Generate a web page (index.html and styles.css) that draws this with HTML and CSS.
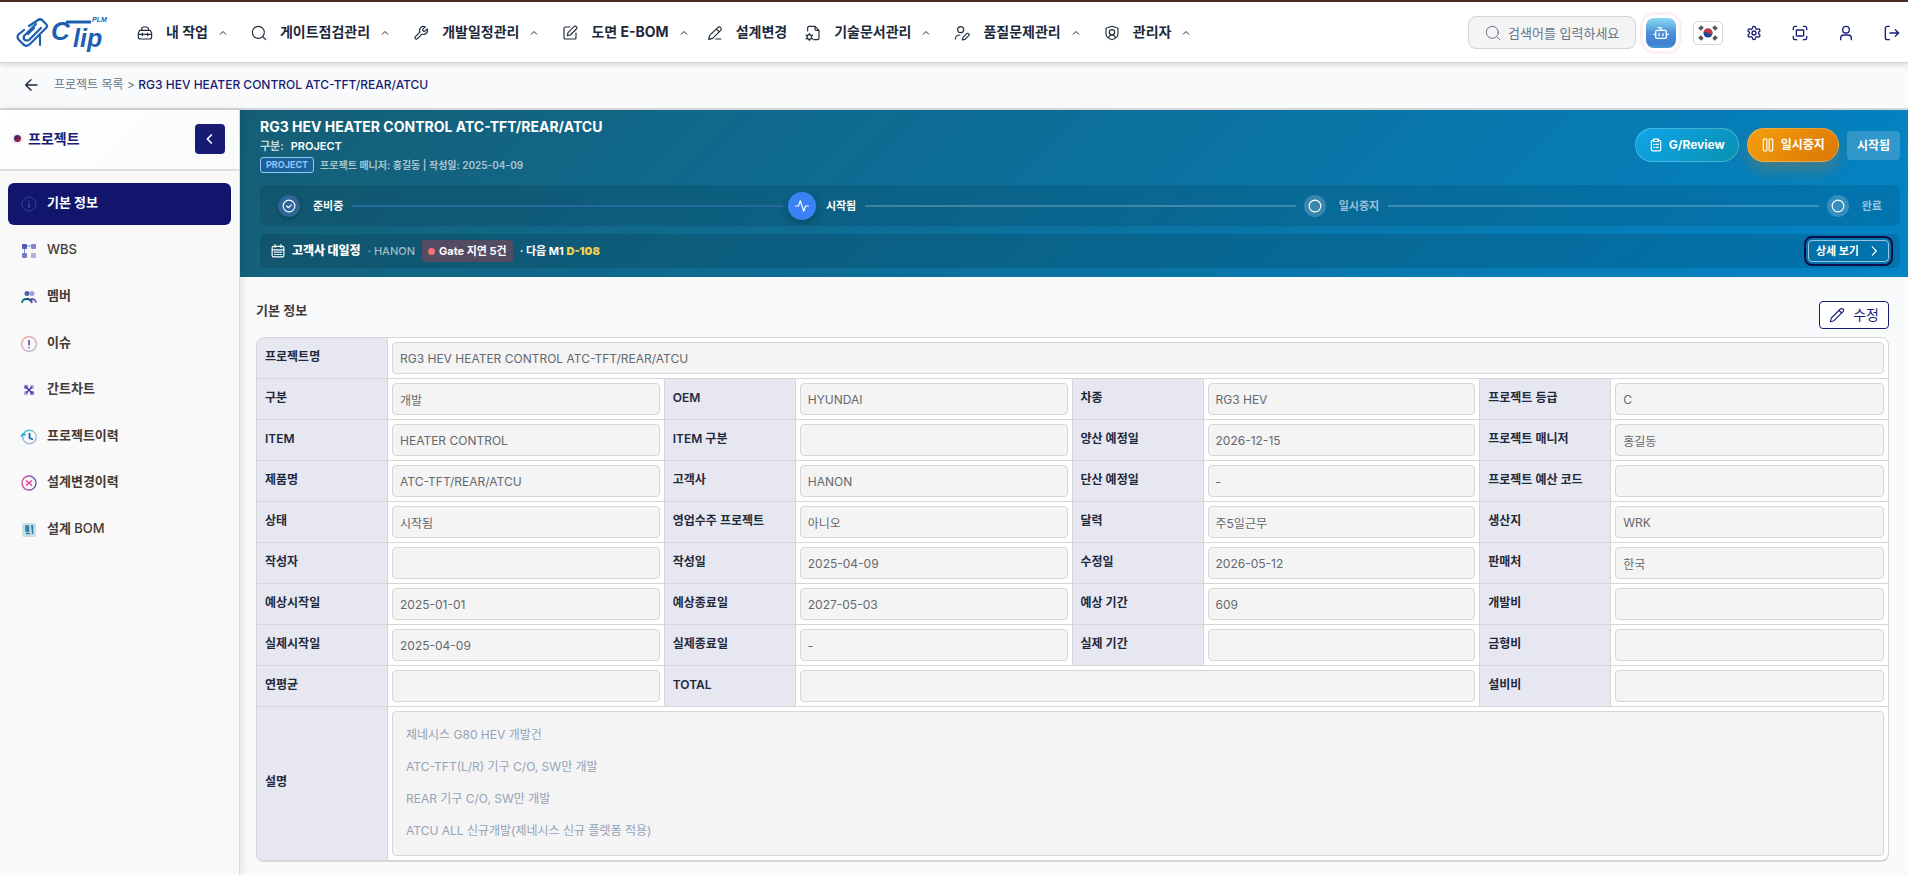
FILE: index.html
```
<!DOCTYPE html>
<html lang="ko">
<head>
<meta charset="utf-8">
<title>CLIP PLM - 프로젝트 기본 정보</title>
<link rel="stylesheet" href="styles.css">
</head>
<body>
<svg class="defs" aria-hidden="true">
  <defs>
    <linearGradient id="g-member" x1="0" y1="0" x2="1" y2="0"><stop offset="0" stop-color="#14917f"/><stop offset=".5" stop-color="#1c2f86"/><stop offset="1" stop-color="#8c7fd0"/></linearGradient>
    <linearGradient id="g-issue" x1="0" y1="0" x2="1" y2="1"><stop offset="0" stop-color="#f0a9a2"/><stop offset="1" stop-color="#b9b3d8"/></linearGradient>
    <linearGradient id="g-clock" x1="0" y1="0" x2="1" y2="1"><stop offset="0" stop-color="#19b5d8"/><stop offset=".5" stop-color="#a6c6dc"/><stop offset="1" stop-color="#a9b0d6"/></linearGradient>
    <linearGradient id="g-change" x1="0" y1="0" x2="1" y2="0"><stop offset="0" stop-color="#d84fa6"/><stop offset="1" stop-color="#6b5aa8"/></linearGradient>
    <symbol id="i-up" viewBox="0 0 14 14"><path d="M4 8.500 7 5.500l3 3"/></symbol>
    <symbol id="i-search" viewBox="0 0 24 24"><circle cx="11" cy="11" r="9"/><path d="m18 18 4 4"/></symbol>
  </defs>
</svg>
<header class="topbar">
  <a class="logo" href="#" aria-label="Clip PLM">
    <svg width="94" height="34" viewBox="0 0 94 34">
      <g fill="none" stroke="#1c5fae" stroke-width="2.200" stroke-linecap="round" stroke-linejoin="round">
        <path d="M13 10 22 4q2-1.500 4 0l4 4q2 2 0 4L14 28q-3 3-6 1l-5-5q-3-3 0-6l5-4"/>
        <path d="m8 20 12-12"/><path d="M8 20q-1 3 1 4t4 0l12-12"/><path d="M12 18 18 12"/>
        <path d="M24 20v9"/>
      </g>
      <path d="M50 6h25" stroke="#1c5fae" stroke-width="3"/>
      <text class="logo-c" x="35" y="24">C</text>
      <text class="logo-lip" x="57" y="31">lip</text>
      <text class="logo-plm" x="76" y="6">PLM</text>
    </svg>
  </a>
  <nav class="menu" aria-label="주 메뉴">
    <a href="#"><svg class="ic" viewBox="0 0 24 24"><path d="M7 8V6q0-3 3-3h4q3 0 3 3v2M4 8h16l2 4v6q0 3-3 3H5q-3 0-3-3v-6zM2 14h20M8 12v4m8-4v4"/></svg><span>내 작업</span><svg class="up"><use href="#i-up"/></svg></a>
    <a href="#"><svg class="ic"><use href="#i-search"/></svg><span>게이트점검관리</span><svg class="up"><use href="#i-up"/></svg></a>
    <a href="#"><svg class="ic" viewBox="0 0 24 24"><path d="M14.500 6.500a1 1 0 0 0 0 1.400l1.600 1.600a1 1 0 0 0 1.400 0l3.800-3.800a6 6 0 0 1-7.900 7.900l-6.900 6.900a2.100 2.100 0 0 1-3-3l6.900-6.900a6 6 0 0 1 7.900-7.900z"/></svg><span>개발일정관리</span><svg class="up"><use href="#i-up"/></svg></a>
    <a href="#"><svg class="ic" viewBox="0 0 24 24"><path d="M12 3H5q-2 0-2 2v14q0 2 2 2h14q2 0 2-2v-7M18 2.500a2.100 2.100 0 0 1 3.500 3.500l-9 9-4.500 1 1-4.500z"/></svg><span>도면 E-BOM</span><svg class="up"><use href="#i-up"/></svg></a>
    <a class="leaf" href="#"><svg class="ic" viewBox="0 0 24 24"><path d="M13 21h8M16 4a2.800 2.800 0 0 1 4.500 4.200L8.500 20 2.500 21.500 4 15.500zM14 6l4 4"/></svg><span>설계변경</span></a>
    <a href="#"><svg class="ic" viewBox="0 0 24 24"><path d="M4 9V4q0-2 2-2h9l6 6v12q0 2-2 2h-6M15 2v4q0 2 2 2h4"/><circle cx="6.500" cy="18" r="3.500"/><path d="M6.500 12.500v2m0 7v2M1.500 15l2 1.300m6 3.400 2 1.300m0-6-2 1.300m-6 3.400-2 1.300"/></svg><span>기술문서관리</span><svg class="up"><use href="#i-up"/></svg></a>
    <a href="#"><svg class="ic" viewBox="0 0 24 24"><circle cx="10" cy="7" r="4.500"/><path d="M2 21v-1q1-5 7-5M19 13a2 2 0 0 1 3 3l-5.500 5.500-4 1 1-4z"/></svg><span>품질문제관리</span><svg class="up"><use href="#i-up"/></svg></a>
    <a href="#"><svg class="ic" viewBox="0 0 24 24"><path d="m12 2 9 3v8q0 6-9 9-9-3-9-9V5z"/><circle cx="12" cy="11" r="4"/><path d="M7 19q1-4 5-4t5 4"/></svg><span>관리자</span><svg class="up"><use href="#i-up"/></svg></a>
  </nav>
  <div class="tools">
    <label class="search"><svg class="ic"><use href="#i-search"/></svg><input type="text" placeholder="검색어를 입력하세요" aria-label="검색"></label>
    <button class="bot" aria-label="AI 도우미"><svg class="ic" viewBox="0 0 24 24"><path d="M12 8V4H8"/><rect x="4" y="8" width="16" height="12" rx="2"/><path d="M1 14h3m16 0h3M9 13v3m6-3v3"/></svg></button>
    <button class="flag" aria-label="한국어"><svg width="20" height="16" viewBox="0 0 20 16"><g stroke="#555" stroke-width="3.500"><path d="m1.500 4.500 3-3M15.500 1.500l3 3M1.500 11.500l3 3M15.500 14.500l3-3"/></g><circle cx="10" cy="8" r="4.500" fill="#1c4596"/><path d="M5.500 8a4.500 4.500 0 0 1 9 0c-1.500 2-3 1-4.500 0s-3-1.500-4.500 0z" fill="#c93a3e"/></svg></button>
    <button class="tool" aria-label="설정"><svg class="ic" viewBox="0 0 24 24"><path d="M12.200 2h-.4a2 2 0 0 0-2 2v.2a2 2 0 0 1-1 1.700l-.4.300a2 2 0 0 1-2 0l-.2-.1a2 2 0 0 0-2.700.7l-.2.400a2 2 0 0 0 .7 2.700l.2.100a2 2 0 0 1 1 1.700v.5a2 2 0 0 1-1 1.700l-.2.100a2 2 0 0 0-.7 2.700l.2.400a2 2 0 0 0 2.700.7l.2-.1a2 2 0 0 1 2 0l.4.300a2 2 0 0 1 1 1.700v.2a2 2 0 0 0 2 2h.4a2 2 0 0 0 2-2v-.2a2 2 0 0 1 1-1.700l.4-.3a2 2 0 0 1 2 0l.2.100a2 2 0 0 0 2.700-.7l.2-.4a2 2 0 0 0-.7-2.700l-.2-.1a2 2 0 0 1-1-1.700v-.5a2 2 0 0 1 1-1.700l.2-.1a2 2 0 0 0 .7-2.700l-.2-.4a2 2 0 0 0-2.700-.7l-.2.100a2 2 0 0 1-2 0l-.4-.3a2 2 0 0 1-1-1.700V4a2 2 0 0 0-2-2z"/><circle cx="12" cy="12" r="3"/></svg></button>
    <button class="tool" aria-label="전체 화면"><svg class="ic" viewBox="0 0 24 24"><path d="M2 7V5q0-3 3-3h2M17 2h2q3 0 3 3v2M22 17v2q0 3-3 3h-2M7 22H5q-3 0-3-3v-2"/><rect x="6.500" y="7.500" width="11" height="9" rx="1"/></svg></button>
    <button class="tool" aria-label="내 계정"><svg class="ic" viewBox="0 0 24 24"><circle cx="12" cy="7" r="5"/><path d="M4 22v-2q0-5 5-5h6q5 0 5 5v2"/></svg></button>
    <button class="tool" aria-label="로그아웃"><svg class="ic" viewBox="0 0 24 24"><path d="M8 22H5q-3 0-3-3V5q0-3 3-3h3M17 17l5-5-5-5M22 12H9"/></svg></button>
  </div>
</header>
<nav class="crumbs" aria-label="경로">
  <button class="back" aria-label="뒤로"><svg class="ic" viewBox="0 0 24 24"><path d="M21 12H4m8-8-8 8 8 8"/></svg></button>
  <p><a href="#">프로젝트 목록</a> &gt; <strong>RG3 HEV HEATER CONTROL ATC-TFT/REAR/ATCU</strong></p>
</nav>
<div class="body">
  <aside class="side">
    <div class="side-head"><i class="dot"></i><h2>프로젝트</h2><button aria-label="메뉴 접기"><svg class="ic" viewBox="0 0 24 24"><path d="m14 6-6 6 6 6"/></svg></button></div>
    <ul class="side-nav">
      <li><a class="on" href="#"><svg viewBox="0 0 16 16"><circle cx="8" cy="8" r="7" fill="none" stroke="#24489a"/><path d="M8 4.500v1M8 7v5" stroke="#3d6fc0"/></svg>기본 정보</a></li>
      <li><a class="latin" href="#"><svg viewBox="0 0 16 16"><path d="M5 3h6M3.500 5v6" stroke="#4a9be8"/><rect x="1" y="1" width="5" height="5" rx="1" fill="#5f55b4"/><rect x="10" y="1" width="5" height="5" rx="1" fill="#8c83cc"/><rect x="1" y="10" width="5" height="5" rx="1" fill="#8077c5"/><rect x="10" y="10" width="5" height="5" rx="1" fill="#b7aedd"/></svg>WBS</a></li>
      <li><a href="#"><svg viewBox="0 0 16 16"><circle cx="11" cy="4.500" r="2.500" fill="#a79bdc"/><circle cx="6" cy="4.500" r="2.500" fill="#4668a8"/><path d="M1 14q0-4 5-4 4 0 5 4M10 10q5 0 5 4" fill="none" stroke="url(#g-member)" stroke-width="2"/></svg>멤버</a></li>
      <li><a href="#"><svg viewBox="0 0 16 16"><circle cx="8" cy="8" r="7.300" fill="none" stroke="url(#g-issue)" stroke-width="1.400"/><path d="M8 4v5.500M8 11v1.200" stroke="#1b1f77" stroke-width="1.200"/></svg>이슈</a></li>
      <li><a href="#"><svg viewBox="0 0 16 16"><g fill="#8d80d4"><circle cx="5" cy="5" r="2.300"/><circle cx="11" cy="5" r="2.300" fill="#b5abe4"/><circle cx="5" cy="11" r="2.300" fill="#b5abe4"/><circle cx="11" cy="11" r="2.300"/></g><path d="m4.500 4.500 7 7M11 5l-6 6" stroke="#3b309e" stroke-width="1.300"/></svg>간트차트</a></li>
      <li><a href="#"><svg viewBox="0 0 16 16"><circle cx="8.500" cy="8" r="6.800" fill="none" stroke="url(#g-clock)" stroke-width="1.400"/><path d="M0 7.500 2 5l3 1" fill="none" stroke="#19b5d8" stroke-width="1.500"/><path d="M8.500 4v5l3.500 1.500" fill="none" stroke="#1466a5" stroke-width="1.800"/></svg>프로젝트이력</a></li>
      <li><a href="#"><svg viewBox="0 0 16 16"><circle cx="8" cy="8" r="7" fill="none" stroke="url(#g-change)" stroke-width="1.400"/><path d="m5 5.500 6 5m0-5-6 5" stroke="#e83e9a" stroke-width="1.600"/></svg>설계변경이력</a></li>
      <li><a href="#"><svg viewBox="0 0 16 16"><rect x="1" y="1" width="14" height="14" rx="2" fill="#c5dfe4"/><path d="M5 4h2.500v5H5zM10 4h1.500v8M5 11.500h4" fill="#2aa79b" stroke="#2878a0" stroke-width="1.400"/></svg><span>설계 <span class="latin">BOM</span></span></a></li>
    </ul>
  </aside>
  <main class="main">
    <section class="banner">
      <div class="ban-top">
        <div>
          <h1>RG3 HEV HEATER CONTROL ATC-TFT/REAR/ATCU</h1>
          <p class="kind"><span>구분:</span><b>PROJECT</b></p>
          <p class="meta"><span class="tag">PROJECT</span>프로젝트 매니저: 홍길동 | 작성일: 2025-04-09</p>
        </div>
        <div class="actions">
          <button class="pill review"><svg class="ic" viewBox="0 0 24 24"><path d="M8 4H6q-2 0-2 2v14q0 2 2 2h12q2 0 2-2V6q0-2-2-2h-2M8 2h8v4H8zM8 11h1m3 0h4M8 16h1m3 0h4"/></svg>G/Review</button>
          <button class="pill pause"><svg class="ic" viewBox="0 0 24 24"><rect x="4" y="2" width="6" height="20" rx="1"/><rect x="14" y="2" width="6" height="20" rx="1"/></svg>일시중지</button>
          <span class="state">시작됨</span>
        </div>
      </div>
      <ol class="steps">
        <li class="done"><i><svg class="ic" viewBox="0 0 24 24"><circle cx="12" cy="12" r="10"/><path d="m8 12 3 3 5-5"/></svg></i><span>준비중</span></li>
        <li class="now"><i><svg class="ic" viewBox="0 0 24 24"><path d="M1 12h5l3-9 6 18 3-9h5"/></svg></i><span>시작됨</span></li>
        <li><i><svg class="ic" viewBox="0 0 24 24"><circle cx="12" cy="12" r="10"/></svg></i><span>일시중지</span></li>
        <li><i><svg class="ic" viewBox="0 0 24 24"><circle cx="12" cy="12" r="10"/></svg></i><span>완료</span></li>
      </ol>
      <div class="plan">
        <svg class="ic" viewBox="0 0 24 24"><rect x="2" y="4" width="20" height="18" rx="2"/><path d="M7 1v5m10-5v5M2 10h20M6 14h2m2 0h4m2 0h2M6 18h2m2 0h4m2 0h2"/></svg>
        <strong>고객사 대일정</strong><span class="cust">· HANON</span>
        <span class="late"><i></i>Gate 지연 5건</span>
        <span class="next">· 다음 M1 <b>D-108</b></span>
        <button class="detail">상세 보기<svg class="ic" viewBox="0 0 24 24"><path d="m9 5 7 7-7 7"/></svg></button>
      </div>
    </section>
    <section class="info">
      <div class="info-head"><h2>기본 정보</h2><button class="edit"><svg class="ic" viewBox="0 0 24 24"><path d="M17 3a2.800 2.800 0 0 1 4 4L7.500 20.500 2 22l1.500-5.500zM15 5l4 4"/></svg>수정</button></div>
      <div class="sheet">
      <table>
        <colgroup><col class="ch"><col><col class="ch"><col><col class="ch"><col><col class="ch"><col></colgroup>
        <tr><th><label for="f1">프로젝트명</label></th><td colspan="7"><input id="f1" readonly value="RG3 HEV HEATER CONTROL ATC-TFT/REAR/ATCU"></td></tr>
        <tr><th><label for="f2">구분</label></th><td><input id="f2" readonly value="개발"></td><th><label for="f3">OEM</label></th><td><input id="f3" readonly value="HYUNDAI"></td><th><label for="f4">차종</label></th><td><input id="f4" readonly value="RG3 HEV"></td><th><label for="f5">프로젝트 등급</label></th><td><input id="f5" readonly value="C"></td></tr>
        <tr><th><label for="f6">ITEM</label></th><td><input id="f6" readonly value="HEATER CONTROL"></td><th><label for="f7">ITEM 구분</label></th><td><input id="f7" readonly></td><th><label for="f8">양산 예정일</label></th><td><input id="f8" readonly value="2026-12-15"></td><th><label for="f9">프로젝트 매니저</label></th><td><input id="f9" readonly value="홍길동"></td></tr>
        <tr><th><label for="f10">제품명</label></th><td><input id="f10" readonly value="ATC-TFT/REAR/ATCU"></td><th><label for="f11">고객사</label></th><td><input id="f11" readonly value="HANON"></td><th><label for="f12">단산 예정일</label></th><td><input id="f12" readonly value="-"></td><th><label for="f13">프로젝트 예산 코드</label></th><td><input id="f13" readonly></td></tr>
        <tr><th><label for="f14">상태</label></th><td><input id="f14" readonly value="시작됨"></td><th><label for="f15">영업수주 프로젝트</label></th><td><input id="f15" readonly value="아니오"></td><th><label for="f16">달력</label></th><td><input id="f16" readonly value="주5일근무"></td><th><label for="f17">생산지</label></th><td><input id="f17" readonly value="WRK"></td></tr>
        <tr><th><label for="f18">작성자</label></th><td><input id="f18" readonly></td><th><label for="f19">작성일</label></th><td><input id="f19" readonly value="2025-04-09"></td><th><label for="f20">수정일</label></th><td><input id="f20" readonly value="2026-05-12"></td><th><label for="f21">판매처</label></th><td><input id="f21" readonly value="한국"></td></tr>
        <tr><th><label for="f22">예상시작일</label></th><td><input id="f22" readonly value="2025-01-01"></td><th><label for="f23">예상종료일</label></th><td><input id="f23" readonly value="2027-05-03"></td><th><label for="f24">예상 기간</label></th><td><input id="f24" readonly value="609"></td><th><label for="f25">개발비</label></th><td><input id="f25" readonly></td></tr>
        <tr><th><label for="f26">실제시작일</label></th><td><input id="f26" readonly value="2025-04-09"></td><th><label for="f27">실제종료일</label></th><td><input id="f27" readonly value="-"></td><th><label for="f28">실제 기간</label></th><td><input id="f28" readonly></td><th><label for="f29">금형비</label></th><td><input id="f29" readonly></td></tr>
        <tr><th><label for="f30">연평균</label></th><td><input id="f30" readonly></td><th><label for="f31">TOTAL</label></th><td colspan="3"><input id="f31" readonly></td><th><label for="f32">설비비</label></th><td><input id="f32" readonly></td></tr>
        <tr><th><label for="f33">설명</label></th><td colspan="7"><textarea id="f33" rows="4" readonly>제네시스 G80 HEV 개발건
ATC-TFT(L/R) 기구 C/O, SW만 개발
REAR 기구 C/O, SW만 개발
ATCU ALL 신규개발(제네시스 신규 플렛폼 적용)</textarea></td></tr>
      </table>
      </div>
    </section>
  </main>
</div>
</body>
</html>
```
FILE: styles.css
```
* { box-sizing: border-box; }
body {
  margin: 0;
  min-height: 100vh;
  display: flex;
  flex-direction: column;
  font: 12px/16px Inter, "Noto Sans CJK KR", sans-serif;
  color: #1e293b;
  background: #f8fafc;
}
h1, h2, p, ul, ol { margin: 0; padding: 0; }
ul, ol { list-style: none; }
a { color: inherit; text-decoration: none; }
button, input, textarea { font: inherit; color: inherit; }
button { padding: 0; border: 0; background: none; display: inline-flex; align-items: center; justify-content: center; }
.defs { position: absolute; width: 0; height: 0; }
.ic { width: 16px; height: 16px; flex: none; fill: none; stroke: currentColor; stroke-width: 2; stroke-linecap: round; stroke-linejoin: round; }
.up { width: 14px; height: 14px; margin: 0 3px 0 8px; fill: none; stroke: currentColor; }

.topbar {
  position: relative;
  z-index: 3;
  height: 63px;
  display: flex;
  align-items: center;
  padding: 1px 1px 0 16px;
  background: #fff;
  border-top: 2px solid #4a2b1e;
  border-bottom: 1px solid #d4d4d4;
  box-shadow: 0 2px 5px rgba(0, 0, 0, .14);
}
.logo { display: flex; width: 94px; margin-right: 18px; }
.logo svg { overflow: visible; }
.logo text { fill: #1c5fae; font-family: "Liberation Sans", sans-serif; font-style: italic; font-weight: 700; }
.logo-c { font-size: 26px; }
.logo-lip { font-size: 25px; }
.logo-plm { font-size: 7px; }
.menu { display: flex; flex: 1; font-size: 14px; font-weight: 700; line-height: 20px; white-space: nowrap; }
.menu a { display: flex; align-items: center; padding: 0 9px; }
.menu .leaf { padding-left: 4px; }
.menu span { margin: 0 0 2px 13px; }
.menu .ic { stroke-width: 1.700; }
.tools { display: flex; align-items: center; color: #181c74; }
.search { display: flex; align-items: center; width: 168px; height: 33px; padding: 0 8px 0 16px; gap: 7px; border: 1px solid #d4d4d4; border-radius: 8px; background: #f4f4f4; color: #64748b; }
.search .ic { stroke-width: 1.500; }
.search input { width: 100%; min-width: 0; padding: 0; border: 0; outline: 0; background: none; font-size: 13px; }
.search input::placeholder { color: #64748b; opacity: 1; }
.bot { width: 30px; height: 30px; margin: 0 17px 0 10px; border-radius: 8px; color: #fff; background: linear-gradient(#8adcf5, #4a90d9 50%, #3f80cf 85%, #4a98d8); box-shadow: 0 0 0 3px #fff, 0 0 0 6px #fcf0f1; }
.flag { width: 30px; height: 24px; margin-right: 8px; border: 1px solid #d9d9dc; border-radius: 4px; }
.tool { width: 46px; height: 32px; }
.tool:last-child { width: 30px; margin-left: 8px; justify-content: center; }

.crumbs { display: flex; align-items: center; height: 47px; padding: 0 22px 2px; gap: 14px; border-bottom: 2px solid #d6d6d8; color: #64748b; }
.crumbs .back { width: 18px; height: 18px; color: #1e293b; }
.crumbs strong { color: #181c74; font-weight: 500; }

.body { display: flex; flex: 1; }
.side { position: relative; z-index: 2; width: 240px; flex: none; background: #f9f9f9; border-right: 1px solid #d9dadc; box-shadow: 2px 0 10px rgba(0, 0, 0, .1); }
.side-head { display: flex; align-items: center; height: 61px; padding: 0 14px 2px; gap: 7px; border-bottom: 2px solid #dededf; background: linear-gradient(135deg, #fff, #f8fafc); }
.side-head h2 { flex: 1; color: #181c74; font-size: 14px; line-height: 20px; font-weight: 700; }
.side-head button { width: 30px; height: 30px; border-radius: 4px; color: #fff; background: #171b72; }
.side-head .ic { stroke-width: 2.500; }
.dot { width: 7px; height: 7px; border-radius: 50%; background: linear-gradient(135deg, #1d2380, #c8202e); box-shadow: 0 0 4px rgba(23, 27, 114, .3); }
.side-nav { display: flex; flex-direction: column; gap: 5px; padding: 12px 8px; }
.side-nav a { display: flex; align-items: center; gap: 10px; padding: 10px 13px 12px; border-radius: 6px; color: #453a35; font-size: 13px; line-height: 1.5; font-weight: 600; }
.side-nav .latin { font-weight: 500; }
.side-nav svg { width: 16px; height: 16px; margin-top: 3px; overflow: visible; }
.side-nav .on { color: #fff; background: #11166c; font-weight: 700; }

.main { flex: 1; min-width: 0; }
.banner { display: flex; flex-direction: column; gap: 8px; padding: 7px 8px 9px 20px; color: #fff; background: linear-gradient(135deg, #155e75, #0284c7); }
.ban-top { display: flex; align-items: flex-start; justify-content: space-between; min-height: 60px; }
h1 { font-size: 14px; line-height: 20px; font-weight: 700; }
.kind { display: flex; gap: 7px; font-size: 11px; line-height: 18px; color: rgba(255, 255, 255, .75); font-weight: 600; }
.kind b { color: #fff; font-weight: 600; }
.meta { display: flex; align-items: center; gap: 6px; margin-top: 2px; font-size: 10px; line-height: 16px; color: rgba(255, 255, 255, .65); font-weight: 600; }
.tag { padding: 0 5px; line-height: 14px; border: 1px solid #93c5fd; border-radius: 3px; background: #1d6199; color: #93c5fd; font-size: 9px; font-weight: 700; }
.actions { display: flex; align-items: center; gap: 8px; margin-top: 11px; font-weight: 700; }
.pill { height: 34px; padding: 0 13px; gap: 6px; border: 1px solid rgba(255, 255, 255, .25); border-radius: 17px; font-weight: 700; }
.pill .ic { width: 14px; height: 14px; }
.review { background: linear-gradient(135deg, #0ea5e9, #0891b2); }
.pause { background: linear-gradient(135deg, #f59e0b, #d97706); box-shadow: 0 8px 16px rgba(217, 119, 6, .3); }
.state { padding: 6px 10px; line-height: 17px; border-radius: 4px; background: rgba(255, 255, 255, .18); }
.steps { display: flex; height: 41px; padding: 0 18px; border-radius: 6px; background: rgba(0, 0, 0, .1); font-size: 11px; font-weight: 700; }
.steps li { display: flex; flex: 1 0 auto; align-items: center; color: rgba(255, 255, 255, .6); }
.steps li:last-child { flex: none; }
.steps li:not(:last-child)::after { content: ""; flex: 1; height: 2px; margin: 0 8px 0 9px; background: rgba(255, 255, 255, .22); }
.steps i { display: flex; align-items: center; justify-content: center; width: 22px; height: 22px; margin-right: 13px; border-radius: 50%; background: rgba(255, 255, 255, .2); color: #fff; }
.steps .ic { width: 14px; height: 14px; }
.steps .done, .steps .now { color: #fff; }
.steps .done i { background: #2c6596; box-shadow: 0 2px 4px rgba(0, 0, 0, .2); }
.steps .done:not(:last-child)::after { background: #246a9f; }
.steps .now i { background: #3b82f6; box-shadow: 0 0 0 3px #3b82f6, 0 3px 8px 3px rgba(0, 0, 0, .25); }
.plan { display: flex; align-items: center; height: 34px; padding: 0 11px; gap: 7px; border-radius: 6px; background: rgba(0, 0, 0, .12); font-size: 11px; font-weight: 700; }
.plan > .ic { width: 14px; height: 14px; }
.plan strong { font-size: 12px; }
.cust { color: rgba(255, 255, 255, .6); font-weight: 500; }
.late { display: flex; align-items: center; gap: 4px; padding: 3px 6px; border-radius: 3px; background: #524b61; }
.late i { width: 7px; height: 7px; border-radius: 50%; background: #f87171; }
.next b { color: #f5cf4a; }
.detail { height: 22px; margin-left: auto; padding: 0 7px; gap: 8px; border: 1px solid rgba(255, 255, 255, .6); border-radius: 4px; outline: 2px solid #0b0e4a; outline-offset: 2px; font-weight: 700; }
.detail .ic { width: 14px; height: 14px; }

.info { padding: 24px 19px 14px 16px; }
.info-head { display: flex; align-items: flex-start; justify-content: space-between; height: 36px; }
.info-head h2 { font-size: 13px; line-height: 18px; font-weight: 600; color: #453a35; }
.edit { height: 28px; padding: 0 9px; gap: 8px; border: 1px solid #181c74; border-radius: 4px; background: #fff; color: #181c74; font-size: 14px; }
.edit .ic { stroke-width: 1.600; }
.sheet { overflow: hidden; border: 1px solid #d6d6d8; border-radius: 8px; background: #fff; box-shadow: 0 1px 0 #d6d6d8; }
table { width: 100%; table-layout: fixed; border-collapse: separate; border-spacing: 0; }
.ch { width: 131px; }
th, td { padding: 4px; border-right: 1px solid #d6d6d8; border-bottom: 1px solid #d6d6d8; }
tr > :last-child { border-right: 0; }
tr:last-child > * { border-bottom: 0; }
th { padding: 0 8px 3px; background: #e7e7f2; text-align: left; font-weight: 600; white-space: nowrap; }
td input, textarea { display: block; width: 100%; border: 1px solid #d6d6d8; border-radius: 4px; background: #f4f4f4; outline: 0; }
td input { height: 32px; padding: 0 7px; color: #64686f; }
textarea { padding: 7px 13px 8px; resize: none; line-height: 32px; color: #94a3b8; overflow: hidden; }
```
